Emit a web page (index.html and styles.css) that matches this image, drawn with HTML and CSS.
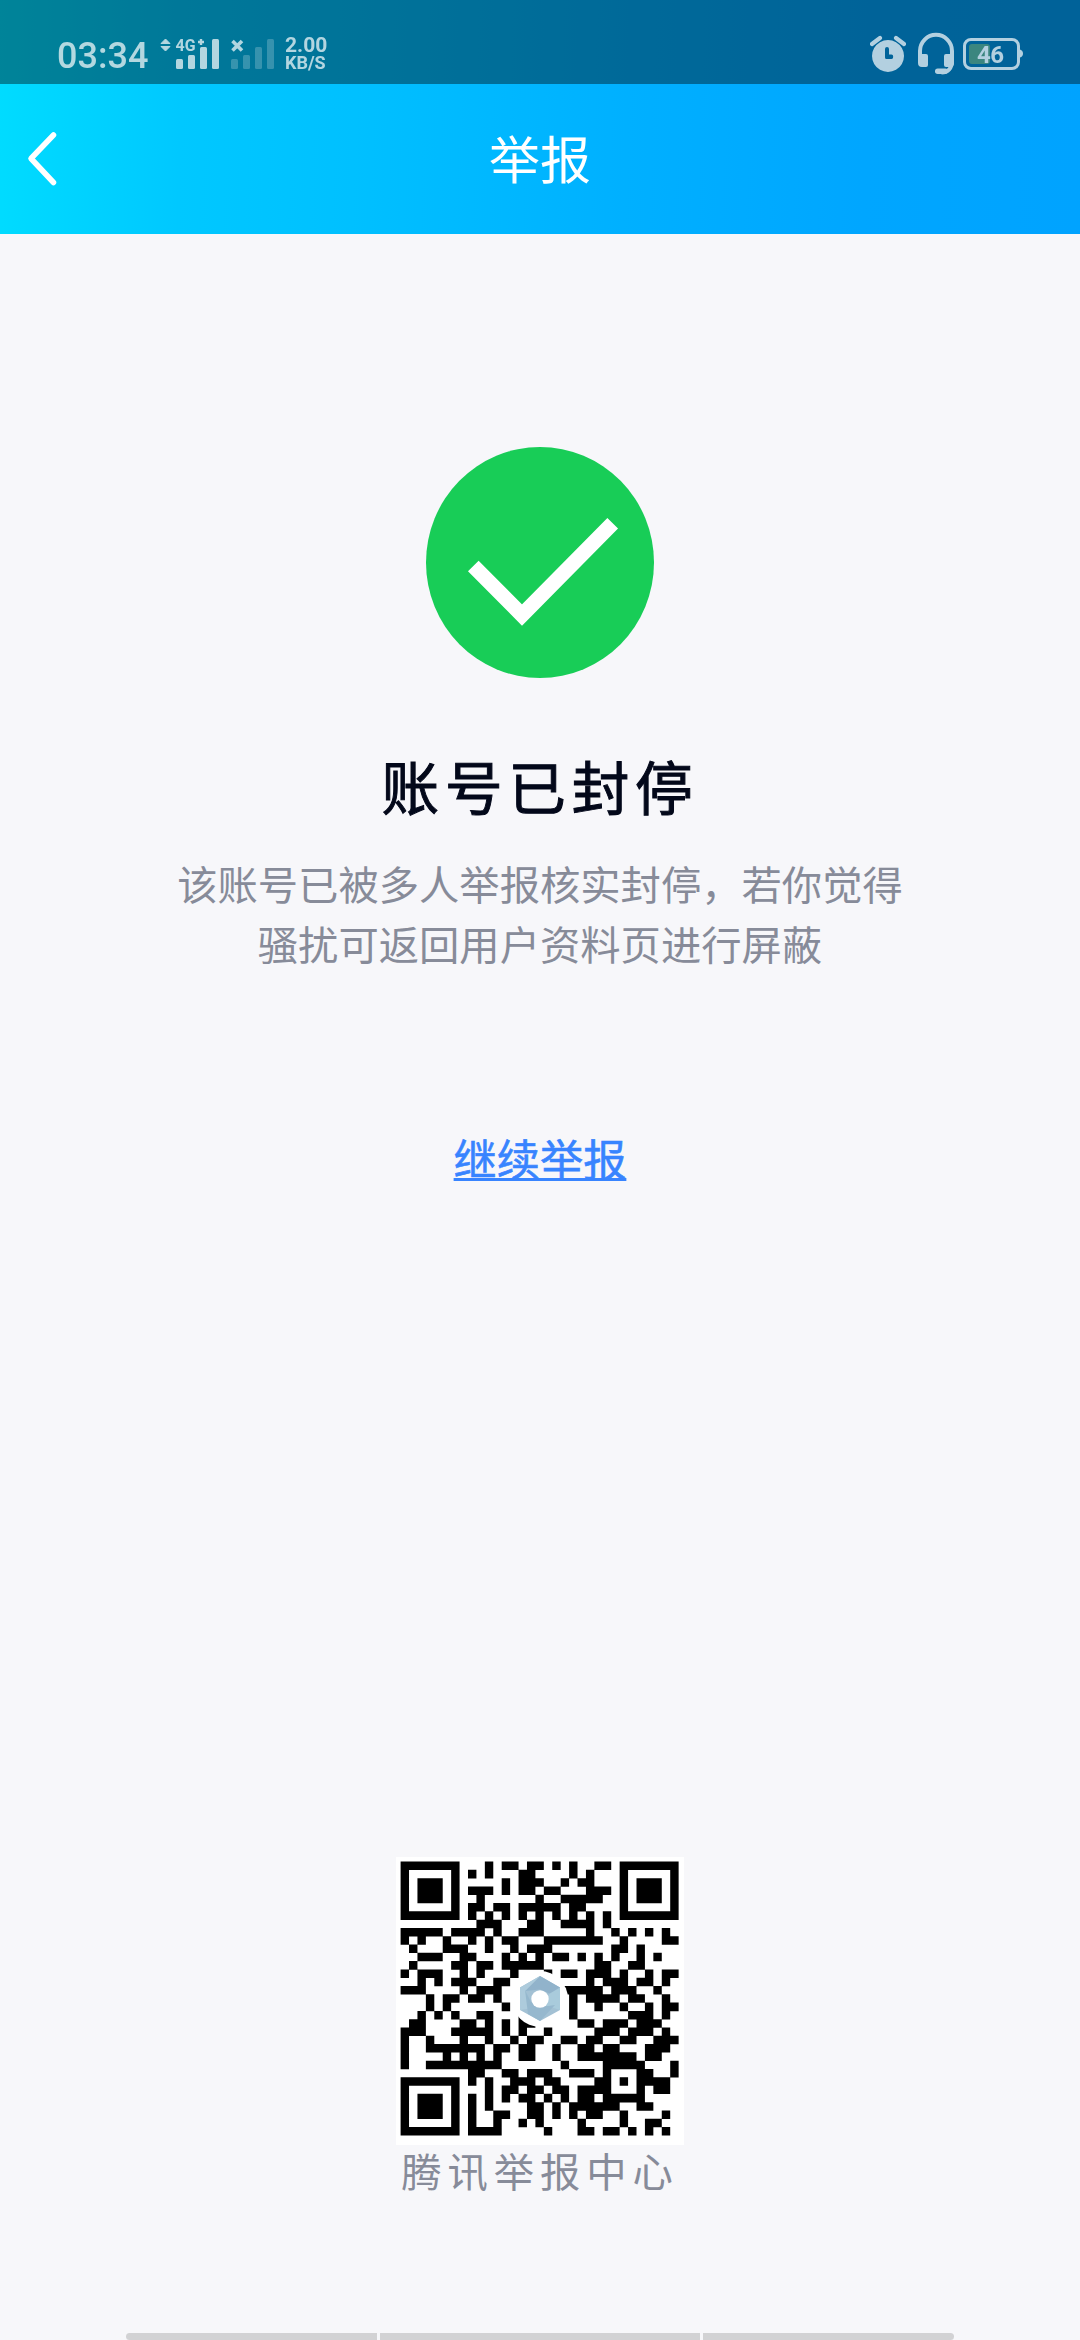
FILE: index.html
```html
<!DOCTYPE html>
<html lang="zh-CN">
<head>
<meta charset="utf-8">
<title>举报</title>
<link rel="stylesheet" href="styles.css">
</head>
<body>
<div class="screen">
  <header class="top">
    <div class="status">
      <span class="clock">03:34</span>
      <svg class="signals" width="116" height="48" viewBox="160 30 116 48">
        <path d="M161 43.5L165.500 39L170 43.500zM161 46.500L165.500 51L170 46.500z" stroke="currentColor" stroke-width="1" stroke-linejoin="round"/>
        <text class="net" x="175.500" y="51" textLength="20" lengthAdjust="spacingAndGlyphs">4G</text>
        <path d="M201 39v6M198 42h6" stroke="currentColor" stroke-width="2.400"/>
        <rect x="176" y="59" width="7" height="10" rx="1.500"/>
        <rect x="188" y="55" width="7" height="14" rx="1.500"/>
        <rect x="200" y="47" width="7" height="22" rx="1.500"/>
        <rect x="212" y="39" width="7" height="30" rx="1.500"/>
        <path d="M232.500 41l9.500 9.500M242 41l-9.500 9.500" stroke="currentColor" stroke-width="3.600"/>
        <g opacity=".3">
          <rect x="231" y="59" width="7" height="10" rx="1.500"/>
          <rect x="243" y="55" width="7" height="14" rx="1.500"/>
          <rect x="255" y="47" width="7" height="22" rx="1.500"/>
          <rect x="267" y="39" width="7" height="30" rx="1.500"/>
        </g>
      </svg>
      <div class="speed"><span>2.00</span><span class="unit">KB/S</span></div>
      <div class="tray">
        <svg class="alarm" width="36" height="38" viewBox="870 34 36 38">
          <path fill-rule="evenodd" d="M888 39a16 16 0 1 0 .01 0zM887 46q2 0 2 2v5.500h2.500q1.700 0 1.700 2.200t-1.700 2.200H886.500q-1.500 0-1.500-1.500V48q0-2 2-2z"/>
          <path d="M872 43l8-6M904 43l-8-6" fill="none" stroke="currentColor" stroke-width="4.200" stroke-linecap="round"/>
        </svg>
        <svg class="headset" width="38" height="44" viewBox="917 32 38 44">
          <path d="M920 57v-6a16 16.200 0 0 1 32 0v10c0 7-4 11.500-10.500 11.500" fill="none" stroke="currentColor" stroke-width="4"/>
          <path d="M918 54h8q2 0 2 2v9q0 2-2 2h-4q-4 0-4-4zM954 54h-8q-2 0-2 2v9q0 2 2 2h4q4 0 4-4z"/>
          <rect x="935" y="68.500" width="13" height="5.500" rx="2.700"/>
        </svg>
        <svg width="62" height="34" viewBox="962 37 62 34">
          <rect x="964.500" y="39.500" width="54" height="29" rx="6.500" fill="none" stroke="currentColor" stroke-width="3"/>
          <path d="M1020 49.500q3 1 3 4t-3 4z"/>
          <rect x="969" y="44" width="21" height="20" rx="3" class="charge"/>
          <text class="percent" x="977" y="63" textLength="27">46</text>
        </svg>
      </div>
    </div>
    <nav class="bar">
      <svg class="back" width="32" height="56" viewBox="0 0 32 56"><path d="M26.500 4L4 27.500 26.500 51.500" fill="none" stroke="#fff" stroke-width="5.500" stroke-linecap="round" stroke-linejoin="round"/></svg>
      <h1 class="title">举报</h1>
    </nav>
  </header>
  <main class="content">
    <svg class="done" width="228" height="231" viewBox="0 0 228 231">
      <ellipse cx="114" cy="115.500" rx="114" ry="115.500" fill="#18cd57"/>
      <path d="M47.300 119L96 168L186.700 76.300" fill="none" stroke="#fff" stroke-width="15"/>
    </svg>
    <h2 class="heading">账号已封停</h2>
    <p class="desc">该账号已被多人举报核实封停，若你觉得<br>骚扰可返回用户资料页进行屏蔽</p>
    <a class="more">继续举报</a>
    <footer class="center">
      <svg class="qr" width="288" height="288" viewBox="0 0 288 288">
        <rect width="288" height="288" fill="#fff"/>
        <g transform="translate(4.600 4.700) scale(8.425 8.295)">
          <path class="modules" d="M0 .5h7m3 0h1m1 0h2m1 0h2m1 0h1m1 0h1m2 0h2m1 0h7
            M0 1.500h1M6 1.500h1M8 1.500h1M10 1.500h1M14 1.500h2M20 1.500h1M22 1.500h1M26 1.500h1M32 1.500h1
            M0 2.500h1M2 2.500h3M6 2.500h1M12 2.500h1M14 2.500h3M19 2.500h1M21 2.500h2M26 2.500h1M28 2.500h3M32 2.500h1
            M0 3.500h1M2 3.500h3M6 3.500h1M8 3.500h3M12 3.500h1M14 3.500h2M17 3.500h2M22 3.500h3M26 3.500h1M28 3.500h3M32 3.500h1
            M0 4.500h1M2 4.500h3M6 4.500h1M9 4.500h1M16 4.500h1M19 4.500h5M26 4.500h1M28 4.500h3M32 4.500h1
            M0 5.500h1M6 5.500h1M8 5.500h2M11 5.500h2M14 5.500h5M20 5.500h2M26 5.500h1M32 5.500h1
            M0 6.500h7M8 6.500h1M10 6.500h1M12 6.500h1M14 6.500h1M16 6.500h1M18 6.500h1M20 6.500h1M22 6.500h1M24 6.500h1M26 6.500h7
            M9 7.500h3M15 7.500h2M19 7.500h4M24 7.500h1
            M0 8.500h5M6 8.500h4M11 8.500h1M14 8.500h3M22 8.500h1M25 8.500h1M27 8.500h1M29 8.500h1M31 8.500h1
            M0 9.500h1M2 9.500h1M5 9.500h1M8 9.500h1M10 9.500h1M12 9.500h2M17 9.500h7M26 9.500h1M31 9.500h2
            M1 10.500h1M5 10.500h3M10 10.500h1M13 10.500h1M15 10.500h3M25 10.500h2M28 10.500h1
            M2 11.500h3M7 11.500h2M12 11.500h1M14 11.500h1M16 11.500h1M18 11.500h2M21 11.500h1M23 11.500h1M25 11.500h1M28 11.500h1M30 11.500h1
            M1 12.500h1M6 12.500h2M9 12.500h2M12 12.500h5M23 12.500h2M27 12.500h2
            M0 13.500h1M2 13.500h3M7 13.500h1M9 13.500h1M13 13.500h1M17 13.500h1M19 13.500h2M22 13.500h3M26 13.500h1M29 13.500h1M31 13.500h2
            M2 14.500h1M4 14.500h1M6 14.500h3M11 14.500h2M22 14.500h1M24 14.500h3M28 14.500h2M31 14.500h1
            M0 15.500h3M7 15.500h1M9 15.500h3M19 15.500h5M25 15.500h3M30 15.500h1
            M3 16.500h1M5 16.500h2M8 16.500h2M11 16.500h1M20 16.500h1M22 16.500h4M27 16.500h2M31 16.500h1
            M3 17.500h1M5 17.500h1M12 17.500h1M20 17.500h1M23 17.500h1M26 17.500h1M29 17.500h1M31 17.500h2
            M2 18.500h1M4 18.500h1M6 18.500h1M9 18.500h2M14 18.500h1M20 18.500h1M27 18.500h3M31 18.500h1
            M1 19.500h2M7 19.500h2M10 19.500h1M12 19.500h1M14 19.500h2M21 19.500h2M24 19.500h3M28 19.500h3
            M0 20.500h3M6 20.500h5M12 20.500h1M14 20.500h1M17 20.500h1M23 20.500h3M27 20.500h3M31 20.500h1
            M0 21.500h1M3 21.500h1M7 21.500h1M10 21.500h1M13 21.500h1M15 21.500h2M19 21.500h2M22 21.500h2M26 21.500h2M30 21.500h3
            M0 22.500h1M3 22.500h7M11 22.500h2M14 22.500h2M18 22.500h1M21 22.500h2M24 22.500h2M29 22.500h3
            M0 23.500h1M5 23.500h1M7 23.500h1M9 23.500h1M11 23.500h1M14 23.500h2M18 23.500h1M21 23.500h7M29 23.500h2
            M0 24.500h1M3 24.500h9M19 24.500h1M24 24.500h5M32 24.500h1
            M8 25.500h2M12 25.500h2M15 25.500h3M20 25.500h3M24 25.500h1M28 25.500h2M32 25.500h1
            M0 26.500h7M8 26.500h1M10 26.500h1M13 26.500h3M17 26.500h2M23 26.500h2M26 26.500h1M28 26.500h4
            M0 27.500h1M6 27.500h1M10 27.500h1M12 27.500h2M15 27.500h2M18 27.500h2M21 27.500h4M28 27.500h1M30 27.500h2
            M0 28.500h1M2 28.500h3M6 28.500h1M8 28.500h1M10 28.500h1M12 28.500h1M14 28.500h2M17 28.500h1M19 28.500h1M21 28.500h2M24 28.500h5
            M0 29.500h1M2 29.500h3M6 29.500h1M8 29.500h1M10 29.500h1M15 29.500h2M18 29.500h1M20 29.500h6M28 29.500h2
            M0 30.500h1M2 30.500h3M6 30.500h1M8 30.500h1M11 30.500h2M15 30.500h2M18 30.500h1M20 30.500h1M22 30.500h2M26 30.500h1M31 30.500h1
            M0 31.500h1M6 31.500h1M8 31.500h1M11 31.500h1M14 31.500h1M16 31.500h1M21 31.500h1M26 31.500h1M29 31.500h2
            M0 32.500h7M8 32.500h4M17 32.500h1M21 32.500h2M24 32.500h2M27 32.500h1M29 32.500h1M31 32.500h1"/>
        </g>
        <circle cx="144" cy="142" r="28" fill="#fff"/>
        <g class="emblem">
          <path d="M144 119L164 130.500V153L144 164L124 153V130.500z" fill="#a3c1d4"/>
          <path d="M144 119L164 130.500V141L144 132.500L129 134z" fill="#91b3cb"/>
          <path d="M164 130.500V153L150 148.500L153 137z" fill="#a9cbdc"/>
          <path d="M144 119L129 134L137 151L124 153V130.500z" fill="#adcbdc"/>
          <path d="M129 133L135 145L145 150L159 148L144 164L132 157z" fill="#96b8ce"/>
          <circle cx="144" cy="142" r="8.700" fill="#fff"/>
        </g>
      </svg>
      <p class="caption">腾讯举报中心</p>
    </footer>
  </main>
  <div class="gestures"><i></i><i></i><i></i></div>
</div>
</body>
</html>
```
FILE: styles.css
```css
* { box-sizing: border-box; margin: 0; padding: 0; }
body {
  background: #f7f7fa;
  font-family: "Noto Sans CJK SC", sans-serif;
}
.screen {
  width: 1080px;
  height: 2340px;
  display: flex;
  flex-direction: column;
  overflow: hidden;
}
svg { display: block; flex: none; fill: currentColor; }
.top {
  height: 234px;
  background: linear-gradient(92deg, #00dcff 0%, #00c8ff 17%, #00c0ff 33%, #00b0ff 58%, #00a6ff 80%, #00a3ff 100%);
}
.status {
  height: 84px;
  padding: 24px 57px 0;
  display: flex;
  align-items: center;
  background: rgba(0, 0, 0, .4);
  color: #fff;
  font-family: Roboto, sans-serif;
}
.status > * { opacity: .7; }
.clock { width: 103px; padding-top: 4px; font-size: 36px; line-height: 40px; font-weight: 500; }
.net { font-size: 17px; font-weight: 700; }
.speed {
  display: flex;
  flex-direction: column;
  margin-left: 9px;
  font-size: 21px;
  line-height: 17px;
  font-weight: 700;
}
.unit { font-size: 18px; }
.tray { display: flex; align-items: center; margin-left: auto; margin-right: -1px; }
.alarm { margin-right: 11px; }
.headset { margin-right: 7px; }
.charge { fill: #6aa36c; fill-opacity: .8; }
.percent { font-size: 24px; font-weight: 700; }
.bar {
  height: 150px;
  display: grid;
  grid-template-columns: 32px 1fr 32px;
  align-items: center;
  padding: 0 27px;
}
.title {
  padding-bottom: 4px;
  text-align: center;
  color: #fff;
  font-size: 51px;
  line-height: 60px;
  font-weight: 400;
}
.content {
  flex: 1;
  display: flex;
  flex-direction: column;
  align-items: center;
  padding-top: 213px;
}
.heading {
  margin-top: 67px;
  font-size: 57.600px;
  line-height: 80px;
  font-weight: 400;
  -webkit-text-stroke: 1px #03081a;
  letter-spacing: 5.760px;
  color: #03081a;
}
.desc {
  margin-top: 28px;
  font-size: 40.320px;
  line-height: 60px;
  text-align: center;
  color: #878b99;
}
.more {
  margin-top: 154px;
  font-size: 43.200px;
  line-height: 60px;
  color: #3884ff;
  -webkit-text-stroke: .6px #3884ff;
  text-decoration: underline;
  text-decoration-thickness: 3px;
  text-decoration-skip-ink: none;
}
.center {
  margin-top: auto;
  margin-bottom: 138px;
  display: flex;
  flex-direction: column;
  align-items: center;
}
.modules { fill: none; stroke: #000; stroke-width: 1.03; filter: blur(.08px); }
.caption {
  font-size: 40.320px;
  line-height: 50px;
  letter-spacing: 5.900px;
  color: #878b99;
}
.gestures {
  height: 7px;
  margin: 0 126px;
  display: grid;
  grid-template-columns: 251px 320px 251px;
  gap: 3px;
}
.gestures i { background: #d2d2d4; }
.gestures i:first-child { border-radius: 4px 0 0 4px; }
.gestures i:last-child { border-radius: 0 4px 4px 0; }
```
